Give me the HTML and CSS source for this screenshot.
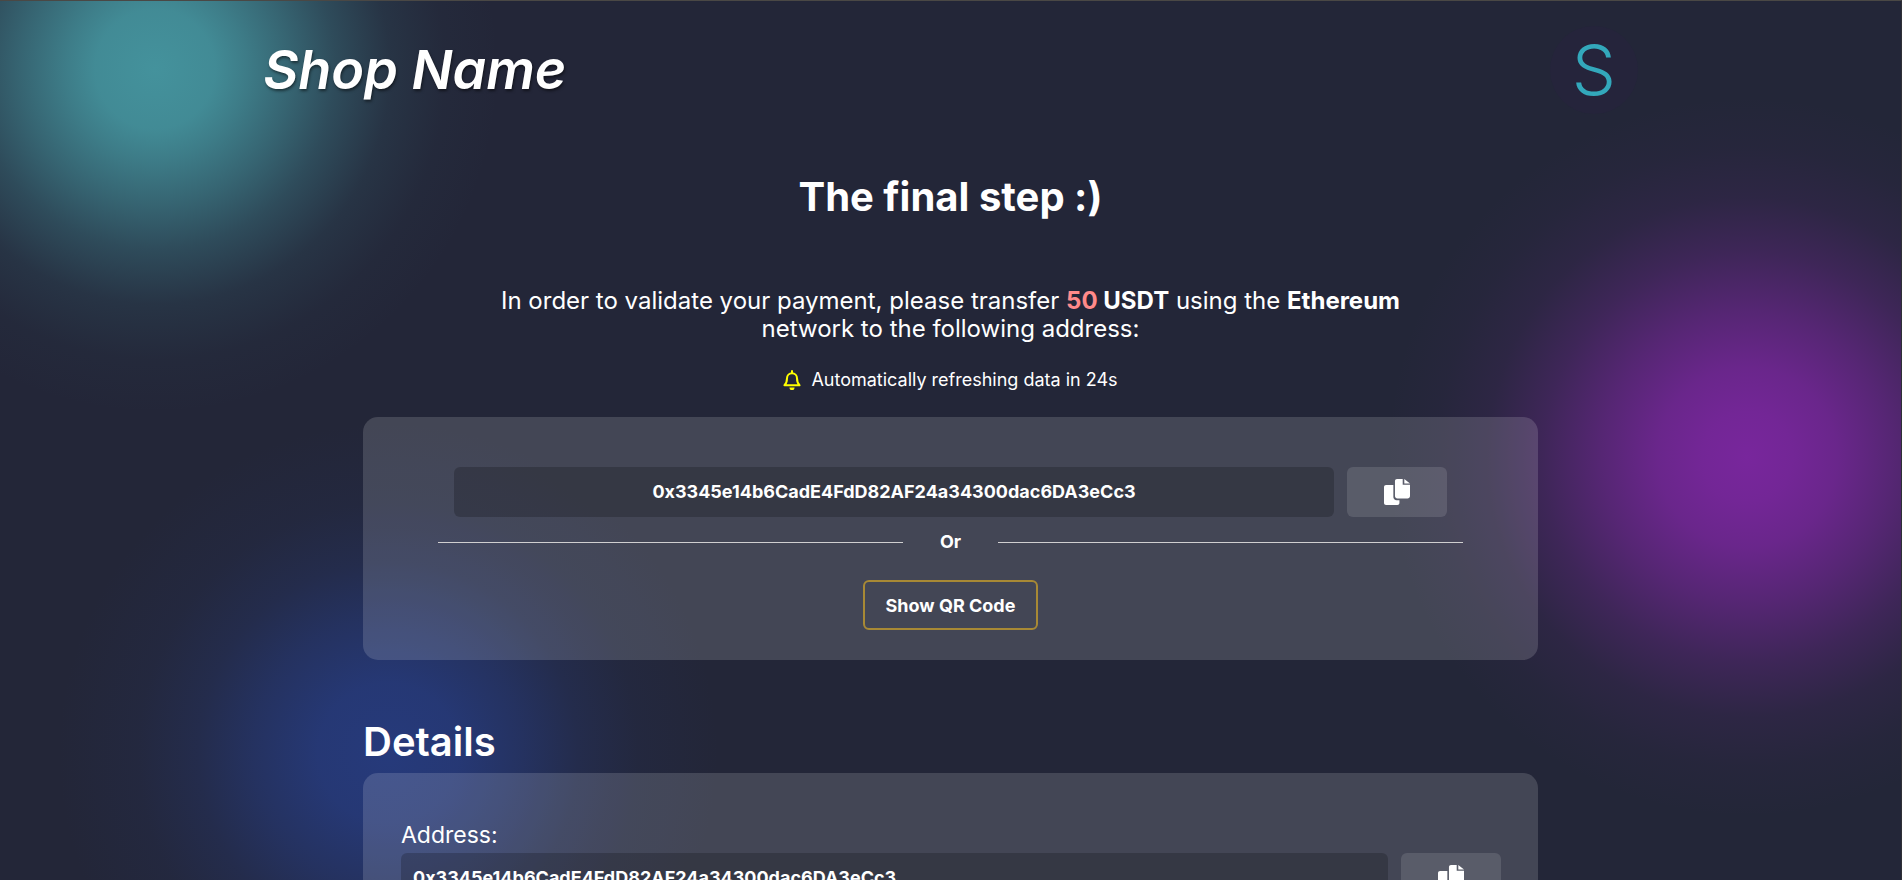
FILE: index.html
```html
<!DOCTYPE html>
<html lang="en">
<head>
<meta charset="utf-8">
<meta name="viewport" content="width=device-width, initial-scale=1">
<title>Shop Name</title>
<link rel="stylesheet" href="styles.css">
</head>
<body>
<svg class="sprite" aria-hidden="true">
  <symbol id="copy" viewBox="0 0 512 512">
    <path d="M256 0h112v112h144v224c0 26-22 48-48 48H264c-26 0-48-22-48-48V40c0-22 18-40 40-40z"/>
    <path d="M400 0l112 90H400z"/>
    <path d="M40 120h144v232c0 36 28 64 64 64h56v56c0 22-18 40-40 40H40c-22 0-40-18-40-40V160c0-22 18-40 40-40z"/>
  </symbol>
</svg>
<div class="page">
  <header class="header">
    <a class="brand" href="#">Shop Name</a>
    <span class="logo">S</span>
  </header>
  <main class="content">
    <h1 class="title">The final step :)</h1>
    <p class="lead">In order to validate your payment, please transfer <strong><span class="amount">50</span> USDT</strong> using the <strong>Ethereum</strong> network to the following address:</p>
    <p class="refresh">
      <svg class="bell" viewBox="0 0 16 18" aria-hidden="true">
        <path d="M8 1v1.500M3.500 7.500a4.500 4.500 0 0 1 9 0c0 3.500 .7 4.700 2.300 6.200H1.200C2.800 12.200 3.500 11 3.500 7.500z" fill="none" stroke="currentColor" stroke-width="1.800" stroke-linejoin="round" stroke-linecap="round"/>
        <path d="M5.700 15.700h4.600a2.300 2.300 0 0 1-4.600 0z" fill="currentColor"/>
      </svg>
      <span>Automatically refreshing data in 24s</span>
    </p>
    <section class="card pay">
      <div class="row inset">
        <output class="field centered">0x3345e14b6CadE4FdD82AF24a34300dac6DA3eCc3</output>
        <button class="copy" type="button" aria-label="Copy address"><svg><use href="#copy"/></svg></button>
      </div>
      <div class="divider">Or</div>
      <button class="qr" type="button">Show QR Code</button>
    </section>
    <h2 class="subtitle">Details</h2>
    <section class="card details">
      <label class="label" for="address">Address:</label>
      <div class="row">
        <output class="field" id="address">0x3345e14b6CadE4FdD82AF24a34300dac6DA3eCc3</output>
        <button class="copy" type="button" aria-label="Copy address"><svg><use href="#copy"/></svg></button>
      </div>
    </section>
  </main>
</div>
</body>
</html>
```
FILE: styles.css
```css
* { box-sizing: border-box; }

html { height: 100%; overflow: hidden; }

body {
  margin: 0;
  min-height: 100%;
  font-family: Inter, "Open Sans", sans-serif;
  color: #fff;
  background: #232638;
}

.sprite { display: none; }

.page {
  min-height: 100vh;
  border-top: 1px solid #4a4845;
  border-right: 1px solid #2f3036;
  background:
    radial-gradient(circle at 155px 68px, #44929c 0, #44929cee 60px, #44929ccc 90px, #44929c94 135px, #44929c59 180px, #44929c21 235px, #44929c08 290px, #44929c00 345px),
    radial-gradient(circle at calc(100% - 154px) 456px, #78269c 0, #78269cf0 45px, #78269cd4 90px, #78269c99 145px, #78269c52 205px, #78269c1f 260px, #78269c0a 310px, #78269c00 360px),
    radial-gradient(circle at 388px 752px, #263a7b 0, #263a7be6 70px, #263a7b99 135px, #263a7b4d 190px, #263a7b1a 250px, #263a7b00 330px);
}

.header {
  display: flex;
  justify-content: space-between;
  align-items: center;
  width: 74%;
  height: 138px;
  margin: 0 auto;
  padding: 0 16px 0 16px;
}

.brand {
  color: inherit;
  font-size: 54px;
  font-style: italic;
  font-weight: 600;
  line-height: 64px;
  text-decoration: none;
  text-shadow: 1px 2px 3px #00000080;
}

.logo {
  display: grid;
  place-items: center;
  width: 88px;
  height: 88px;
  border-radius: 50%;
  background: #25243b;
  color: #33a8bb;
  font-size: 70px;
  font-weight: 300;
  line-height: 88px;
}

.content {
  width: 1175px;
  max-width: 94%;
  margin: 0 auto;
}

.title {
  margin: 34px 0 66px;
  font-size: 40px;
  line-height: 48px;
  text-align: center;
}

.lead {
  max-width: 940px;
  margin: 0 auto;
  font-size: 24px;
  line-height: 28px;
  text-align: center;
}

.amount { color: #ff8a8a; }

.refresh {
  display: flex;
  justify-content: center;
  align-items: center;
  gap: 10px;
  margin: 25px 0;
  font-size: 18px;
  line-height: 24px;
}

.bell { width: 18px; height: 20px; color: #ff0; }

.card {
  border-radius: 15px;
  background: #ffffff26;
}

.pay {
  display: flex;
  flex-direction: column;
  align-items: center;
  padding: 50px 75px 30px;
}

.row { display: flex; gap: 13px; width: 100%; }
.inset { padding: 0 16px; }

.field {
  flex: 1;
  padding: 0 12px;
  border-radius: 6px;
  background: #00000033;
  font-size: 18px;
  font-weight: 700;
  line-height: 50px;
}

.centered { text-align: center; }

.copy {
  display: grid;
  place-items: center;
  width: 100px;
  height: 50px;
  border: 0;
  border-radius: 6px;
  background: #ffffff1f;
  color: #fff;
}

.copy svg { width: 26px; height: 26px; fill: currentColor; }

.divider {
  display: flex;
  align-items: center;
  gap: 37px;
  width: 100%;
  margin: 13px 0 26px;
  font-size: 18px;
  font-weight: 700;
  line-height: 24px;
}

.divider::before,
.divider::after {
  content: "";
  flex: 1;
  height: 1px;
  background: #d0cfd0;
}

.qr {
  height: 50px;
  padding: 0 21px;
  border: 2px solid #a88935;
  border-radius: 6px;
  background: transparent;
  color: inherit;
  font: 700 18px Inter, "Open Sans", sans-serif;
}

.subtitle {
  margin: 58px 0 7px;
  font-size: 40px;
  font-weight: 600;
  line-height: 48px;
}

.details { padding: 47px 37px 50px 38px; }

.label {
  display: block;
  margin-bottom: 3px;
  font-size: 23px;
  line-height: 30px;
}
```
